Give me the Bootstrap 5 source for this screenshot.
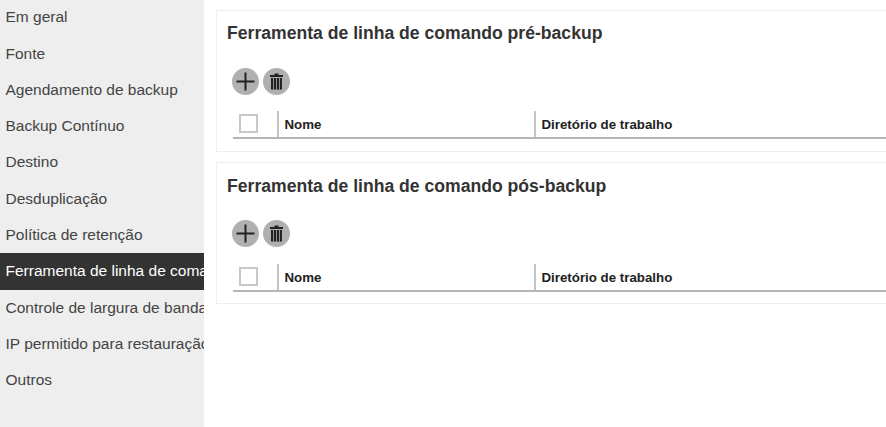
<!DOCTYPE html>
<html lang="pt">
<head>
  <meta charset="UTF-8" />
  <title>Ferramenta de linha de comando</title>
  <link href="https://cdn.jsdelivr.net/npm/bootstrap@5.3.0/dist/css/bootstrap.min.css" rel="stylesheet" />
  <style>
    html, body { height: 100%; overflow: hidden; }
    body { font-family: "Liberation Sans", Arial, sans-serif; color: #333; background: #fff; }
    .side-menu { width: 204px; height: 428px; background: #eee; overflow: hidden; flex-shrink: 0; margin-top: -.8px; }
    .side-item { height: 36.3px; line-height: 36.3px; padding-left: 5.5px; font-size: 15.5px; color: #444; white-space: nowrap; overflow: hidden; }
    .side-item.current { background: #333; color: #fff; }
    .content-area { padding: 10px 0 0 12px; width: 900px; flex-shrink: 0; }
    .tool-panel { border: 1px solid #eee; border-right: 0; height: 141.5px; margin-bottom: 10.5px; padding: 11px 0 0 10px; }
    .tool-panel + .tool-panel { height: 142px; padding-top: 12px; }
    .tool-panel h2 { font-size: 17.6px; line-height: 22px; font-weight: 700; margin: 0; color: #333; }
    .tool-btns { margin: 24px 0 0 5px; gap: 4px; }
    .tool-panel + .tool-panel .tool-btns { margin-top: 23px; }
    .round-btn { width: 27px; height: 27px; border-radius: 50%; background: #b0b0b0; border: 0; padding: 0; }
    .round-btn svg { display: block; }
    .tool-head { margin: 16px 0 0 6px; height: 28px; border-bottom: 2px solid #b5b5b5; font-size: 13.3px; font-weight: 700; color: #222; }
    .tool-panel + .tool-panel .tool-head { margin-top: 17px; }
    .head-cell { border-left: 2px solid #c4c4c4; padding-left: 5.5px; line-height: 28px; height: 26px; }
    .check-cell { width: 44px; }
    .name-cell { width: 257px; }
    .fake-check { width: 19px; height: 19px; border: 2px solid #c8c8c8; background: #fff; margin: 3px 0 0 6px; }
  </style>
</head>
<body class="d-flex">

  <div class="side-menu">
    <div class="side-item">Em geral</div>
    <div class="side-item">Fonte</div>
    <div class="side-item">Agendamento de backup</div>
    <div class="side-item">Backup Contínuo</div>
    <div class="side-item">Destino</div>
    <div class="side-item">Desduplicação</div>
    <div class="side-item">Política de retenção</div>
    <div class="side-item current">Ferramenta de linha de comando</div>
    <div class="side-item">Controle de largura de banda</div>
    <div class="side-item">IP permitido para restauração</div>
    <div class="side-item">Outros</div>
  </div>

  <div class="content-area">
    <div class="tool-panel">
      <h2>Ferramenta de linha de comando pré-backup</h2>
      <div class="tool-btns d-flex">
        <button class="round-btn" type="button"><svg width="27" height="27" viewBox="0 0 27 27"><path d="M13.5 4.500v18M4.500 13.500h18" stroke="#222" stroke-width="2" fill="none"/></svg></button>
        <button class="round-btn" type="button"><svg width="27" height="27" viewBox="0 0 27 27"><path d="M11.500 5.500h4v1.500h4.500v2h-13v-2h4.500z" fill="#222"/><path d="M8 10h11v11.500h-11z" fill="#222"/><path d="M10.500 10v11.500M13.500 10v11.500M16.500 10v11.500" stroke="#b0b0b0" stroke-width=".8"/></svg></button>
      </div>
      <div class="tool-head d-flex">
        <div class="check-cell"><div class="fake-check"></div></div>
        <div class="head-cell name-cell">Nome</div>
        <div class="head-cell flex-grow-1">Diretório de trabalho</div>
      </div>
    </div>
    <div class="tool-panel">
      <h2>Ferramenta de linha de comando pós-backup</h2>
      <div class="tool-btns d-flex">
        <button class="round-btn" type="button"><svg width="27" height="27" viewBox="0 0 27 27"><path d="M13.5 4.500v18M4.500 13.500h18" stroke="#222" stroke-width="2" fill="none"/></svg></button>
        <button class="round-btn" type="button"><svg width="27" height="27" viewBox="0 0 27 27"><path d="M11.500 5.500h4v1.500h4.500v2h-13v-2h4.500z" fill="#222"/><path d="M8 10h11v11.500h-11z" fill="#222"/><path d="M10.500 10v11.500M13.500 10v11.500M16.500 10v11.500" stroke="#b0b0b0" stroke-width=".8"/></svg></button>
      </div>
      <div class="tool-head d-flex">
        <div class="check-cell"><div class="fake-check"></div></div>
        <div class="head-cell name-cell">Nome</div>
        <div class="head-cell flex-grow-1">Diretório de trabalho</div>
      </div>
    </div>
  </div>

  <script src="https://cdn.jsdelivr.net/npm/bootstrap@5.3.0/dist/js/bootstrap.bundle.min.js"></script>
</body>
</html>
